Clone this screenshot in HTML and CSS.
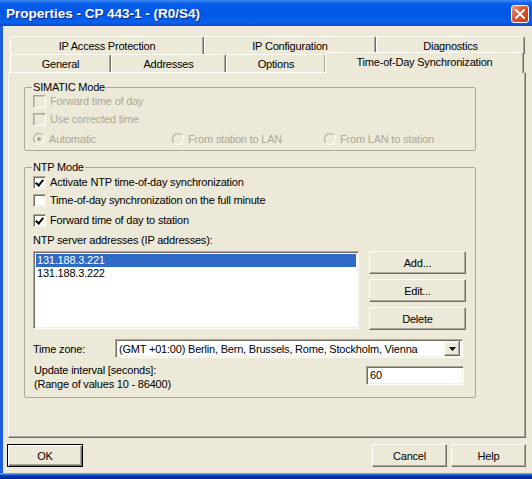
FILE: index.html
```html
<!DOCTYPE html>
<html lang="en">
<head>
    <meta charset="UTF-8">
    <title>Properties - CP 443-1 - (R0/S4)</title>
    <link rel="stylesheet" href="styles.css">
</head>
<body>
    <div class="window">
        <div class="titlebar">
            <span class="title">Properties - CP 443-1 - (R0/S4)</span>
            <span class="close-btn">
                <svg width="10" height="10" viewBox="0 0 10 10">
                    <path d="M1 1 L9 9 M9 1 L1 9" stroke="#fff" stroke-width="2" stroke-linecap="square"/>
                </svg>
            </span>
        </div>

        <div class="client">
            <div class="tabs">
                <div class="tab-row">
                    <div class="tab tab-access">IP Access Protection</div>
                    <div class="tab tab-ipconf">IP Configuration</div>
                    <div class="tab tab-diag">Diagnostics</div>
                </div>
                <div class="tab-row">
                    <div class="tab tab-general">General</div>
                    <div class="tab tab-addr">Addresses</div>
                    <div class="tab tab-options">Options</div>
                    <div class="tab tab-time active">Time-of-Day Synchronization</div>
                </div>
            </div>

            <div class="panel">
                <fieldset class="group simatic">
                    <legend>SIMATIC Mode</legend>
                    <div class="opt disabled"><span class="check"></span>Forward time of day</div>
                    <div class="opt disabled"><span class="check"></span>Use corrected time</div>
                    <div class="radio-row disabled">
                        <div class="radio-item first"><span class="radio on"></span>Automatic</div>
                        <div class="radio-item second"><span class="radio"></span>From station to LAN</div>
                        <div class="radio-item"><span class="radio"></span>From LAN to station</div>
                    </div>
                </fieldset>

                <fieldset class="group ntp">
                    <legend>NTP Mode</legend>
                    <div class="opt first"><span class="check checked"></span>Activate NTP time-of-day synchronization</div>
                    <div class="opt"><span class="check"></span>Time-of-day synchronization on the full minute</div>
                    <div class="opt wide"><span class="check checked"></span>Forward time of day to station</div>
                    <div class="caption">NTP server addresses (IP addresses):</div>
                    <div class="server-row">
                        <div class="listbox">
                            <div class="list-item selected">131.188.3.221</div>
                            <div class="list-item">131.188.3.222</div>
                        </div>
                        <div class="side-buttons">
                            <div class="btn">Add...</div>
                            <div class="btn">Edit...</div>
                            <div class="btn">Delete</div>
                        </div>
                    </div>
                    <div class="tz-row">
                        <span class="tz-label">Time zone:</span>
                        <div class="combo">
                            <span class="combo-text">(GMT +01:00) Berlin, Bern, Brussels, Rome, Stockholm, Vienna</span>
                            <span class="combo-arrow">
                                <svg width="7" height="4" viewBox="0 0 7 4"><path d="M0 0 H7 L3.5 4 Z" fill="#000"/></svg>
                            </span>
                        </div>
                    </div>
                    <div class="update-row">
                        <div class="update-label">Update interval [seconds]:<br>(Range of values 10 - 86400)</div>
                        <div class="textbox">60</div>
                    </div>
                </fieldset>
            </div>

            <div class="dialog-buttons">
                <div class="btn default">OK</div>
                <div class="btn cancel">Cancel</div>
                <div class="btn">Help</div>
            </div>
        </div>
        <div class="frame-bottom"></div>
    </div>
</body>
</html>
```

FILE: styles.css
```css
body {
    margin: 0;
    font-family: "Liberation Sans", Arial, sans-serif;
    font-size: 11px;
    letter-spacing: -0.2px;
    color: #000;
    background-color: #ece9d8;
}
.window {
    width: 532px;
    height: 479px;
    display: flex;
    flex-direction: column;
    background-color: #ece9d8;
    overflow: hidden;
}

/* title bar */
.titlebar {
    height: 26px;
    flex: none;
    display: flex;
    align-items: center;
    justify-content: space-between;
    padding: 0 3px 0 6px;
    background: linear-gradient(#3d8af5 0%, #0a5fea 14%, #0056e4 50%, #0b61ec 86%, #0848c9 100%);
    color: #fff;
}
.title {
    font-size: 13.5px;
    font-weight: bold;
    letter-spacing: 0;
    text-shadow: 1px 1px #0b2a8e;
}
.close-btn {
    width: 18px;
    height: 18px;
    margin-top: 2px;
    box-sizing: border-box;
    border: 1px solid #fff;
    border-radius: 3px;
    background: linear-gradient(135deg, #f09a7c 0%, #e0532c 45%, #c53a16 100%);
    display: flex;
    align-items: center;
    justify-content: center;
}

.client {
    flex: 1;
    border-left: 3px solid #1b5fe0;
    display: flex;
    flex-direction: column;
}
.frame-bottom {
    height: 6px;
    flex: none;
    background: linear-gradient(#6c9cf0 0, #6c9cf0 1px, #0d43cc 2px, #00218f 100%);
}

/* tabs */
.tabs {
    margin: 10px 0 0 7px;
}
.tab-row {
    display: flex;
    height: 18px;
    align-items: flex-start;
}
.tab {
    height: 18px;
    box-sizing: border-box;
    border-top: 1px solid #fff;
    border-left: 1px solid #fff;
    border-right: 1px solid #716f64;
    box-shadow: inset -1px 0 #aca899;
    border-radius: 2px 2px 0 0;
    background-color: #ece9d8;
    display: flex;
    align-items: center;
    justify-content: center;
    padding-top: 1px;
}
.tab-access { width: 194px; }
.tab-ipconf { width: 172px; }
.tab-diag { width: 149px; }
.tab-general { width: 101px; }
.tab-addr { width: 115px; }
.tab-options { width: 100px; }
.tab-time { width: 199px; }
.tab.active {
    position: relative;
    z-index: 1;
    height: 21px;
    margin-top: -2px;
    margin-left: -1px;
    align-items: flex-start;
    padding-top: 3px;
}

/* tab page */
.panel {
    margin-left: 5px;
    width: 518px;
    height: 366px;
    box-sizing: border-box;
    border: 1px solid;
    border-color: #fff #716f64 #716f64 #fff;
    box-shadow: inset -1px -1px #aca899;
    padding: 8px 0 0 15px;
}
.group {
    width: 452px;
    box-sizing: border-box;
    margin: 0;
    padding: 0 9px 0 8px;
    border: 1px solid #aca899;
    border-radius: 2px;
    min-inline-size: 0;
}
.group legend {
    padding: 0 1px;
    margin-left: -1px;
    line-height: 13px;
}
.simatic {
    padding-bottom: 4px;
}
.ntp {
    margin-top: 10px;
    padding-bottom: 6px;
}

/* checkboxes and radios */
.opt {
    height: 14px;
    display: flex;
    align-items: center;
    margin-top: 4px;
}
.opt:first-of-type {
    margin-top: 0;
}
.ntp .opt.first {
    margin-top: 1px;
}
.opt.wide {
    margin-top: 6px;
}
.check {
    width: 13px;
    height: 13px;
    flex: none;
    box-sizing: border-box;
    margin-right: 4px;
    border: 1px solid;
    border-color: #aca899 #fff #fff #aca899;
    box-shadow: inset 1px 1px #716f64, inset -1px -1px #f1efe2;
    background-color: #fff;
    position: relative;
}
.check.checked::after {
    content: "";
    position: absolute;
    left: 3px;
    top: 1px;
    width: 3px;
    height: 6px;
    border: solid #000;
    border-width: 0 2px 2px 0;
    transform: rotate(40deg);
}
.disabled {
    color: #aca899;
}
.disabled .check {
    background-color: #ece9d8;
    box-shadow: inset 1px 1px #c9c6b6, inset -1px -1px #f1efe2;
}
.radio-row {
    display: flex;
    height: 14px;
    margin-top: 6px;
}
.radio-item {
    display: flex;
    align-items: center;
}
.radio-item.first { width: 139px; }
.radio-item.second { width: 152px; }
.radio {
    width: 12px;
    height: 12px;
    flex: none;
    box-sizing: border-box;
    margin-right: 4px;
    border-radius: 50%;
    border: 1px solid;
    border-color: #aca899 #fff #fff #aca899;
    background-color: #ece9d8;
    display: flex;
    align-items: center;
    justify-content: center;
}
.radio.on::after {
    content: "";
    width: 4px;
    height: 4px;
    border-radius: 50%;
    background-color: #aca899;
}

/* server list */
.caption {
    height: 14px;
    line-height: 14px;
    margin-top: 6px;
}
.server-row {
    display: flex;
    margin-top: 4px;
}
.listbox {
    width: 326px;
    height: 78px;
    box-sizing: border-box;
    border: 1px solid;
    border-color: #aca899 #fff #fff #aca899;
    box-shadow: inset 1px 1px #716f64, inset -1px -1px #f1efe2;
    background-color: #fff;
    padding: 2px;
}
.list-item {
    height: 13px;
    line-height: 13px;
    padding-left: 1px;
}
.list-item.selected {
    background-color: #316ac5;
    color: #fff;
}
.side-buttons {
    margin-left: 10px;
    display: flex;
    flex-direction: column;
    gap: 5px;
}
.btn {
    width: 97px;
    height: 23px;
    box-sizing: border-box;
    border: 1px solid;
    border-color: #fff #716f64 #716f64 #fff;
    box-shadow: inset -1px -1px #aca899;
    background-color: #ece9d8;
    display: flex;
    align-items: center;
    justify-content: center;
}

/* time zone */
.tz-row {
    display: flex;
    align-items: center;
    margin-top: 9px;
}
.tz-label {
    width: 82px;
    padding-top: 1px;
}
.combo {
    width: 348px;
    height: 19px;
    box-sizing: border-box;
    border: 1px solid;
    border-color: #aca899 #fff #fff #aca899;
    box-shadow: inset 1px 1px #716f64, inset -1px -1px #f1efe2;
    background-color: #fff;
    display: flex;
    align-items: center;
    padding: 0 2px 0 3px;
}
.combo-text {
    flex: 1;
}
.combo-arrow {
    width: 16px;
    height: 15px;
    box-sizing: border-box;
    border: 1px solid;
    border-color: #f1efe2 #716f64 #716f64 #f1efe2;
    box-shadow: inset -1px -1px #aca899, inset 1px 1px #fff;
    background-color: #ece9d8;
    display: flex;
    align-items: center;
    justify-content: center;
}

.update-row {
    display: flex;
    justify-content: space-between;
    margin-top: 5px;
}
.update-label {
    line-height: 14px;
    padding-left: 1px;
}
.textbox {
    width: 98px;
    height: 19px;
    margin-top: 3px;
    margin-right: 2px;
    box-sizing: border-box;
    border: 1px solid;
    border-color: #aca899 #fff #fff #aca899;
    box-shadow: inset 1px 1px #716f64, inset -1px -1px #f1efe2;
    background-color: #fff;
    padding: 2px 0 0 3px;
    line-height: 13px;
}

/* OK / Cancel / Help */
.dialog-buttons {
    display: flex;
    margin-top: 6px;
    padding: 0 6px 0 4px;
    gap: 4px;
}
.dialog-buttons .btn {
    width: 75px;
}
.dialog-buttons .btn.default {
    width: 76px;
    border: 1px solid #000;
    box-shadow: inset 1px 1px #fff, inset -1px -1px #716f64, inset -2px -2px #aca899;
}
.btn.cancel {
    margin-left: auto;
}
```
